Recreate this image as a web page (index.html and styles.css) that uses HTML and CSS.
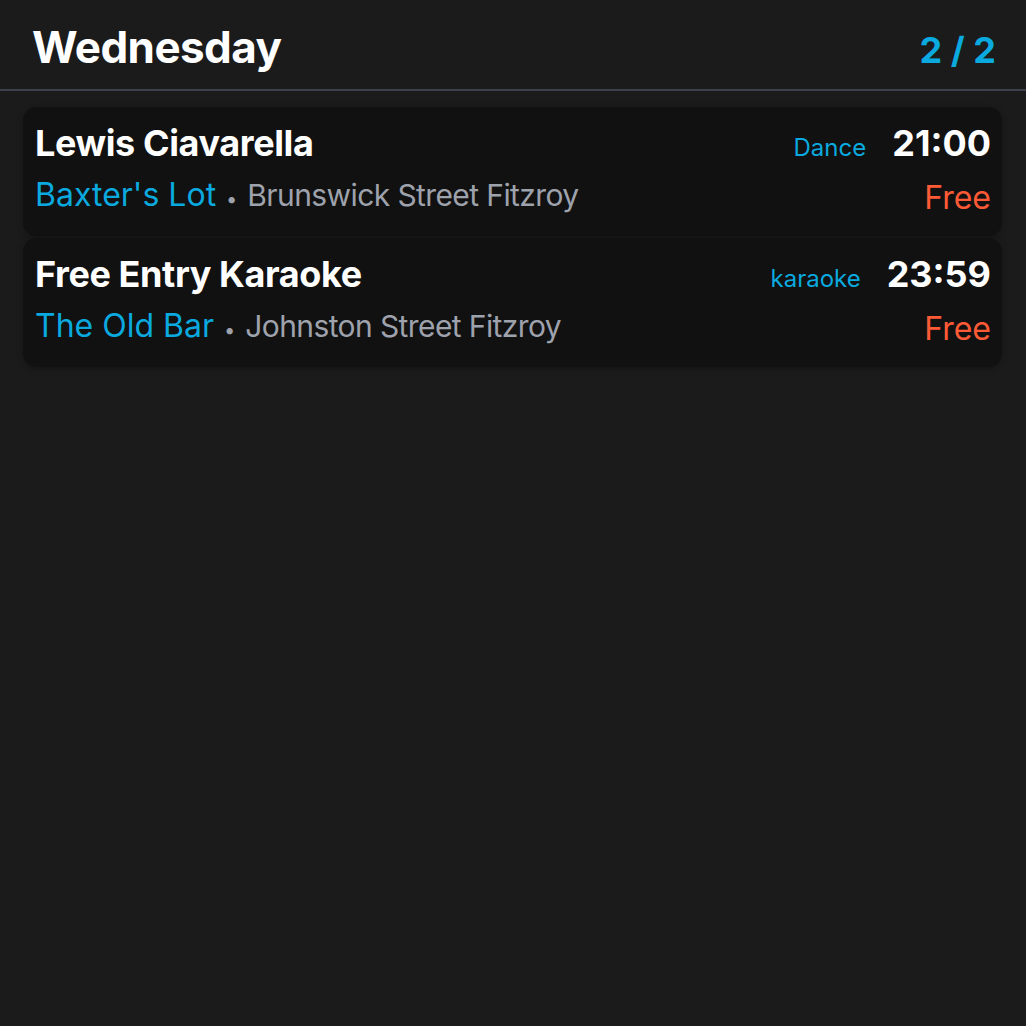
FILE: index.html
```html
<!DOCTYPE html>
<html>
<head>
<meta charset="utf-8">
<link rel="stylesheet" href="styles.css">
</head>
<body>
<div class="widget">
  <header class="header">
    <h1 class="day">Wednesday</h1>
    <div class="count">2 / 2</div>
  </header>
  <div class="list">
    <div class="card">
      <div class="left">
        <div class="title">Lewis Ciavarella</div>
        <div class="place"><span class="venue">Baxter's Lot</span><span class="dot">•</span><span class="addr">Brunswick Street Fitzroy</span></div>
      </div>
      <div class="right">
        <div class="top"><span class="tag">Dance</span><span class="time">21:00</span></div>
        <div class="price">Free</div>
      </div>
    </div>
    <div class="card">
      <div class="left">
        <div class="title">Free Entry Karaoke</div>
        <div class="place"><span class="venue">The Old Bar</span><span class="dot">•</span><span class="addr">Johnston Street Fitzroy</span></div>
      </div>
      <div class="right">
        <div class="top"><span class="tag">karaoke</span><span class="time">23:59</span></div>
        <div class="price">Free</div>
      </div>
    </div>
  </div>
</div>
</body>
</html>
```
FILE: styles.css
```css
html, body {
  margin: 0;
  padding: 0;
  background: #1b1b1b;
  height: 100%;
}
body {
  font-family: Inter, "Noto Sans", sans-serif;
  color: #fff;
}
.widget {
  display: flex;
  flex-direction: column;
}
.header {
  display: flex;
  justify-content: space-between;
  align-items: baseline;
  padding: 17px 30px 12px 32px;
  border-bottom: 2px solid #3b404b;
}
.day {
  margin: 0;
  font-size: 44px;
  line-height: 60px;
  font-weight: 700;
  letter-spacing: -0.6px;
}
.count {
  font-size: 36px;
  font-weight: 700;
  color: #0aa9df;
}
.list {
  display: flex;
  flex-direction: column;
  gap: 2px;
  padding: 16px 24px 0 23px;
}
.card {
  display: flex;
  justify-content: space-between;
  background: #111111;
  border-radius: 14px;
  padding: 14px 11px 15px 12px;
  box-shadow: 0 2px 6px rgba(0,0,0,0.25);
}
.left, .right {
  display: flex;
  flex-direction: column;
  gap: 8px;
}
.right {
  align-items: flex-end;
  gap: 6px;
}
.title {
  font-size: 36px;
  line-height: 44px;
  font-weight: 700;
  letter-spacing: -0.4px;
}
.place {
  font-size: 32px;
  line-height: 44px;
  display: flex;
  align-items: baseline;
}
.venue {
  color: #0aa9df;
}
.dot {
  color: #9ea2ac;
  font-size: 20px;
  margin: 0 10px;
}
.addr {
  color: #9ea2ac;
  font-size: 30px;
  letter-spacing: -0.6px;
}
.top {
  display: flex;
  align-items: baseline;
  gap: 26px;
  line-height: 44px;
}
.tag {
  font-size: 24px;
  color: #0aa9df;
}
.time {
  font-size: 36px;
  font-weight: 700;
}
.price {
  font-size: 32px;
  line-height: 44px;
  color: #ff5a36;
}
```
